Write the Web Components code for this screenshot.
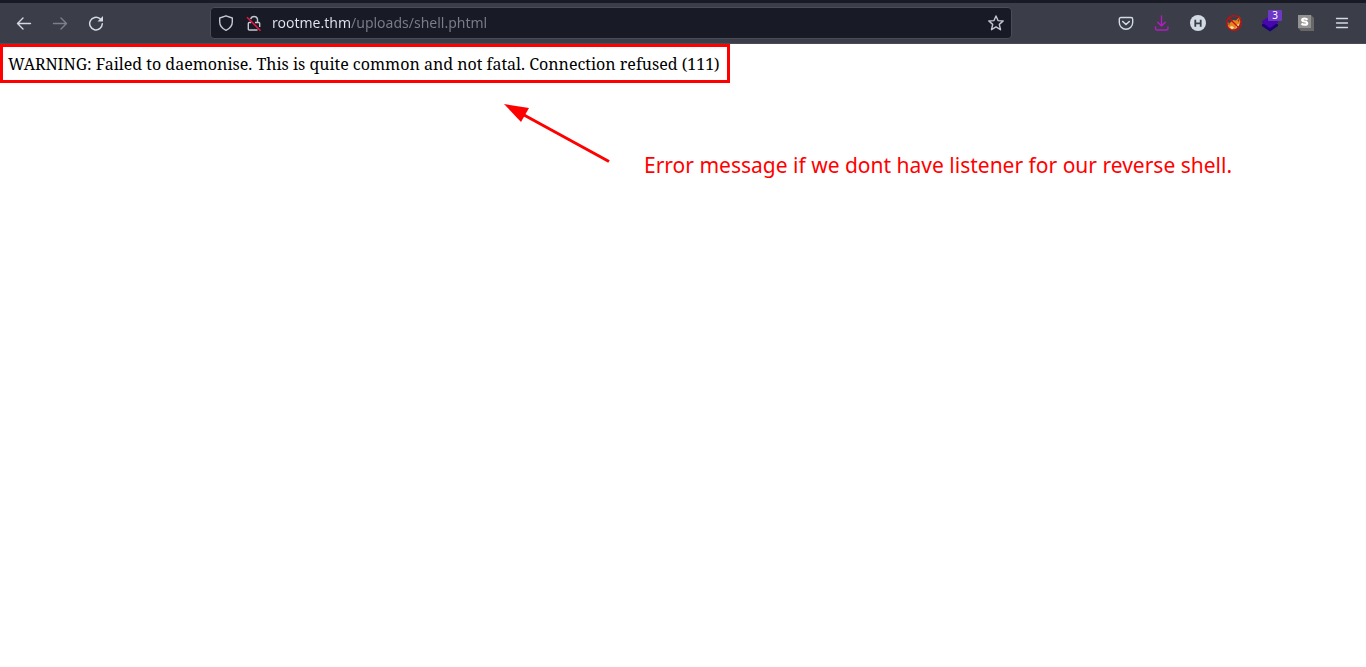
<!DOCTYPE html>
<html lang="en">
<head>
<meta charset="utf-8">
<title>rootme.thm/uploads/shell.phtml</title>
<style>
html, body { margin: 0; background: #fff; }
body { font-family: "Noto Sans", sans-serif; }
</style>
</head>
<body>
<browser-window></browser-window>
<script>
class TemplateElement extends HTMLElement {
  constructor() {
    super();
    const template = document.createElement('template');
    template.innerHTML = this.constructor.markup;
    this.attachShadow({ mode: 'open' }).append(template.content.cloneNode(true));
  }
}

class ToolButton extends TemplateElement {
  static markup = `
    <style>
      :host { display: block; flex: none; width: 36px; height: 40px; }
      button { display: grid; place-items: center; width: 100%; height: 100%; padding: 0; border: 0; background: none; color: #d3dae3; }
      :host([dim]) button { color: #7d808a; }
      ::slotted(svg) { display: block; }
    </style>
    <button type="button"><slot></slot></button>`;
  connectedCallback() {
    const button = this.shadowRoot.querySelector('button');
    button.setAttribute('aria-label', this.getAttribute('label'));
    button.disabled = this.hasAttribute('dim');
  }
}
customElements.define('tool-button', ToolButton);

class AddressBar extends TemplateElement {
  static markup = `
    <style>
      :host { display: flex; align-items: center; box-sizing: border-box; height: 32px; min-width: 0; padding: 0 1px; background: #181a26; border: 1px solid #4a4c58; border-radius: 4px; color: #d3dae3; }
      button { display: grid; place-items: center; flex: none; width: 28px; height: 28px; padding: 0; border: 0; background: none; color: #c3c8d2; }
      input { flex: 1; min-width: 0; height: 28px; box-sizing: border-box; padding: 0 0 2px; margin-left: 4px; border: 0; outline: 0; font: 14px/20px "Noto Sans", sans-serif; color: #7b7e8a; -webkit-text-fill-color: transparent; background: linear-gradient(90deg, #e2e7f0 79px, #7b7e8a 79px); -webkit-background-clip: text; background-clip: text; }
    </style>
    <button type="button" aria-label="Tracking protection">
      <svg width="16" height="16" viewBox="0 0 16 16" fill="none" stroke="currentColor" stroke-width="1.4" stroke-linejoin="round"><path d="M8 .8 14.3 3v4c0 3.700-2.500 6.500-6.300 8.300C4.200 13.500 1.700 10.700 1.700 7V3z"/></svg>
    </button>
    <button type="button" aria-label="Connection not secure">
      <svg width="16" height="16" viewBox="0 0 16 16" fill="none" stroke="currentColor" stroke-width="1.400"><path d="M4.700 4.200a3.500 3.500 0 0 1 6.800 0V7M9 7.500h3.700q1 0 1 1V12M11.500 15H3.300q-1 0-1-1V8.500q0-1 1-1H5"/><path d="M1 2.200 14.500 15.700" stroke="#e21b42" stroke-width="1.600"/></svg>
    </button>
    <input type="text" aria-label="Address" value="rootme.thm/uploads/shell.phtml" spellcheck="false">
    <button type="button" aria-label="Bookmark this page">
      <svg width="16" height="16" viewBox="0 0 16 16" fill="none" stroke="currentColor" stroke-width="1.400" stroke-linejoin="round"><path d="m8 .9 2 4.700 5.200.4-3.900 3.400 1.200 5.300L8 11.900l-4.500 2.800 1.200-5.300L.8 6 6 5.600z"/></svg>
    </button>`;
}
customElements.define('address-bar', AddressBar);

class BrowserToolbar extends TemplateElement {
  static markup = `
    <style>
      :host { display: flex; align-items: center; height: 40px; padding: 0 6px; border-top: 3px solid #181a26; border-bottom: 1px solid #4a4c58; background: #3b3d49; }
      nav { display: flex; flex: none; }
      address-bar { flex: 1; margin: 0 96px; }
    </style>
    <nav aria-label="History">
      <tool-button label="Back"><svg width="16" height="16" viewBox="0 0 16 16" fill="none" stroke="currentColor" stroke-width="1.400" stroke-linecap="round" stroke-linejoin="round"><path d="M14.500 8.500h-13M7 3 1.500 8.500 7 14"/></svg></tool-button>
      <tool-button label="Forward" dim><svg width="16" height="16" viewBox="0 0 16 16" fill="none" stroke="currentColor" stroke-width="1.400" stroke-linecap="round" stroke-linejoin="round"><path d="M1.500 8.500h13M9 3l5.500 5.500L9 14"/></svg></tool-button>
      <tool-button label="Reload"><svg width="16" height="16" viewBox="0 0 16 16"><path d="M14.300 8.800A6.300 6.300 0 1 1 12 3.700" fill="none" stroke="currentColor" stroke-width="1.500" stroke-linecap="round"/><path d="M15 1v5.500H9.500z" fill="currentColor"/></svg></tool-button>
    </nav>
    <address-bar></address-bar>
    <nav aria-label="Extensions">
      <tool-button label="Save to Pocket"><svg width="16" height="16" viewBox="0 0 16 16" fill="none" stroke="currentColor" stroke-width="1.400" stroke-linecap="round" stroke-linejoin="round"><path d="M3 2.500h10q1.700 0 1.700 1.700V7.500a6.700 6.700 0 0 1-13.400 0V4.200Q1.300 2.500 3 2.500z"/><path d="M4.700 6.500 8 9.500l3.300-3" stroke-width="1.600"/></svg></tool-button>
      <tool-button label="Downloads"><svg width="16" height="16" viewBox="0 0 16 16" fill="none" stroke="#b51bc4" stroke-width="1.400" stroke-linecap="round" stroke-linejoin="round"><path d="M7.500 1v10M3.700 7.200l3.800 3.800 3.800-3.800M1.500 12v1.500q0 1.500 1.500 1.500h9.500q1.500 0 1.500-1.500V12"/></svg></tool-button>
      <tool-button label="H extension"><svg width="16" height="16" viewBox="0 0 16 16"><circle cx="8" cy="8" r="8" fill="#d3dae3"/><path d="M5.300 4.800v7M10.700 4.800v7M5.300 8.300h5.400" stroke="#3b3d49" stroke-width="1.800"/></svg></tool-button>
      <tool-button label="FoxyProxy off"><svg width="16" height="16" viewBox="0 0 16 16"><path d="M1.500 7.500 4 8l3-3 3 .5 4-4 .5 5-1 3.500-3.500 4-5 1-3-3z" fill="#e88420"/><path d="m2 8.500 2-.3-1 2zM11.500 5.500l2-2-.5 3.500z" fill="#7b3a18"/><path d="m3.500 12 2.500-1 2 1.500L6 14.500zM10 10.500l3-2-.5 2.500-2 2z" fill="#ffe0b0"/><circle cx="8" cy="8" r="7.400" fill="none" stroke="#c80f0f" stroke-width="1.200"/><path d="m3 3 10 10" stroke="#c80f0f" stroke-width="1.200"/></svg></tool-button>
      <tool-button label="Wappalyzer, 3 technologies"><svg width="24" height="34" viewBox="0 -4 24 34"><path d="M4 14.500 12 9l8 5.500V16l-8 5.500L4 16z" fill="#1d0079"/><path d="m4 11 8-5 8 5v1.500L12 18l-8-5.500z" fill="#4608ad"/><rect x="10" y="0" width="14" height="11" rx="1" fill="#6d38c4"/><text x="17" y="9" text-anchor="middle" font-family="Noto Sans, sans-serif" font-size="10" fill="#fff">3</text></svg></tool-button>
      <tool-button label="S extension"><svg width="16" height="16" viewBox="0 0 16 16"><path d="M13 0 16 3v13H3l-3-3z" fill="#686868"/><path d="M0 0h13v13H0z" fill="#929292"/><path d="M9.500 4.700Q8.500 3.500 6.500 3.500 4.200 3.500 4.200 5 4.200 6.200 6.700 6.500 9.200 6.800 9.200 8.200 9.200 9.700 6.700 9.700 4.600 9.700 3.500 8.500" fill="none" stroke="#fff" stroke-width="2.200"/></svg></tool-button>
      <tool-button label="Application menu"><svg width="16" height="16" viewBox="0 0 16 16" stroke="currentColor" stroke-width="1.300" stroke-linecap="round"><path d="M2.500 3.500h11M2.500 8h11M2.500 12.500h11"/></svg></tool-button>
    </nav>`;
}
customElements.define('browser-toolbar', BrowserToolbar);

class WarningBox extends TemplateElement {
  static markup = `
    <style>
      :host { display: block; box-sizing: border-box; width: fit-content; min-width: 730px; border: 3px solid #f00; padding: 6px 5px 4px; font: 16px/23px "Noto Serif", "Liberation Serif", serif; color: #000; }
    </style>
    <slot></slot>`;
}
customElements.define('warning-box', WarningBox);

class ArrowNote extends TemplateElement {
  static markup = `
    <style>
      :host { display: flex; align-items: flex-start; gap: 34px; padding: 21px 0 0 504px; color: #f00; }
      svg { display: block; flex: none; }
      p { margin: 46px 0 0; font: 21px/30px "Noto Sans", sans-serif; }
    </style>
    <svg width="106" height="60" viewBox="0 0 106 60" aria-hidden="true"><path d="M20 11 105 57.500" stroke="currentColor" stroke-width="3"/><path d="m0 0 25 4-8 14z" fill="currentColor"/></svg>
    <p><slot></slot></p>`;
}
customElements.define('arrow-note', ArrowNote);

class BrowserWindow extends TemplateElement {
  static markup = `
    <style>:host { display: block; } header, main { display: block; }</style>
    <header><browser-toolbar></browser-toolbar></header>
    <main>
      <warning-box>WARNING: Failed to daemonise. This is quite common and not fatal. Connection refused (111)</warning-box>
      <arrow-note>Error message if we dont have listener for our reverse shell.</arrow-note>
    </main>`;
}
customElements.define('browser-window', BrowserWindow);
</script>
</body>
</html>
